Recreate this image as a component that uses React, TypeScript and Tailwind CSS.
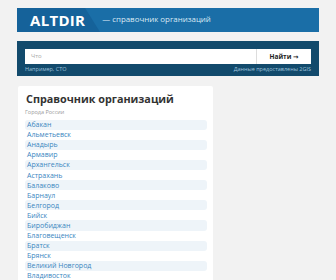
import React from "react";

const cities = [
  "Абакан",
  "Альметьевск",
  "Анадырь",
  "Армавир",
  "Архангельск",
  "Астрахань",
  "Балаково",
  "Барнаул",
  "Белгород",
  "Бийск",
  "Биробиджан",
  "Благовещенск",
  "Братск",
  "Брянск",
  "Великий Новгород",
  "Владивосток",
];

export default function App() {
  return (
    <div
      className="w-[336px] h-[280px] overflow-hidden bg-[#f2f2f2] px-[17px] pt-[8px]"
      style={{ fontFamily: '"Open Sans", "DejaVu Sans", sans-serif' }}
    >
      {/* Header */}
      <div className="relative h-[24px] bg-[#1a6ea7] flex items-center overflow-hidden">
        <div className="absolute left-0 top-0 h-full w-[83px] bg-[#15629a] [clip-path:polygon(0_0,82%_0,100%_100%,0_100%)]" />
        <div className="relative pl-[13px] text-white font-bold text-[15px] leading-none tracking-[0.3px]">
          ALTDIR
        </div>
        <div className="relative ml-[17px] text-[7.9px] leading-none text-[#dbe9f4]">
          — справочник организаций
        </div>
      </div>

      {/* Search */}
      <div className="mt-[9px] h-[35px] bg-[#124a6c] px-[8px] pt-[8px]">
        <div className="h-[15px] bg-white flex items-stretch">
          <div className="flex-1 flex items-center pl-[6px] text-[6px] text-[#aaaaaa]">
            Что
          </div>
          <div className="w-[55px] border-l border-[#dddddd] flex items-center justify-center text-[6.5px] font-bold text-[#222]">
            Найти →
          </div>
        </div>
        <div className="mt-[3px] flex justify-between text-[5.5px] leading-none text-[#9fc3dc]">
          <span>Например, СТО</span>
          <span>Данные предоставлены 2GIS</span>
        </div>
      </div>

      {/* Card */}
      <div className="mt-[10px] ml-[1px] w-[195px] bg-white rounded-[2px] pl-[7px] pr-[6px] pt-[7px] h-[200px]">
        <div className="pl-[1px] text-[10.8px] font-bold leading-[12px] text-[#333333]">
          Справочник организаций
        </div>
        <div className="mt-[5px] text-[5.5px] leading-none text-[#9a9a9a]">
          Города России
        </div>
        <div className="mt-[4px] flex flex-col">
          {cities.map((c, i) => (
            <div
              key={c}
              className={
                "h-[10.1px] flex items-center pl-[2px] rounded-[3px] text-[7px] text-[#3a86bf] leading-none " +
                (i % 2 === 0 ? "bg-[#eef4f9]" : "")
              }
            >
              {c}
            </div>
          ))}
        </div>
      </div>
    </div>
  );
}
